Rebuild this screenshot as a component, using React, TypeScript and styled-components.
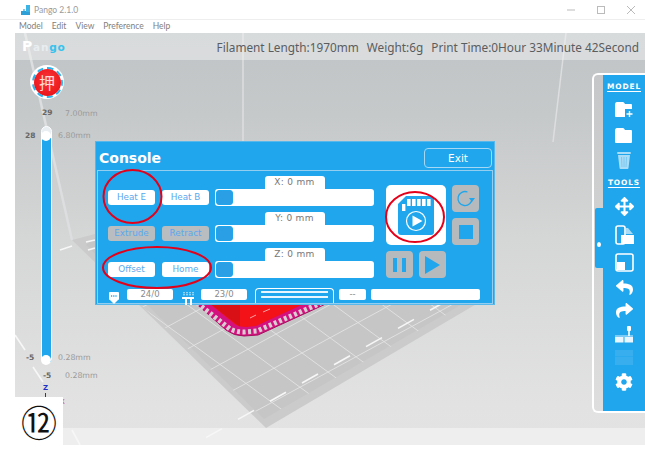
import React from "react";
import styled, { createGlobalStyle } from "styled-components";
import { FaArrowsAlt, FaCog, FaReply, FaShare } from "react-icons/fa";

const BLUE = "#1fa6ec";
const UI = `"Noto Sans", "DejaVu Sans", sans-serif`;
const WIDE = `"DejaVu Sans", "Noto Sans", sans-serif`;

const Global = createGlobalStyle`
  html, body { margin: 0; padding: 0; background: #fff; }
  * { box-sizing: border-box; }
`;

const Page = styled.div`
  position: relative;
  width: 645px;
  height: 464px;
  overflow: hidden;
  background: #fff;
  font-family: ${UI};
`;

const TitleBar = styled.header`
  height: 20px;
  display: flex;
  align-items: center;
  padding: 0 10px 0 21px;
  border-bottom: 1px solid #eeeeee;
`;

const AppTitle = styled.span`
  margin-left: 3px;
  font-size: 8.5px;
  color: #9a9a9a;
  font-family: Lato, sans-serif;
  flex: 1;
`;

const WindowButtons = styled.div`
  display: flex;
  align-items: center;
  gap: 22px;
`;

const MenuBar = styled.nav`
  height: 13px;
  display: flex;
  align-items: center;
  gap: 9px;
  padding-left: 19px;
`;

const MenuItem = styled.span`
  font-family: Lato, sans-serif;
  font-size: 8.5px;
  line-height: 13px;
  color: #808080;
`;

const Workspace = styled.main`
  position: relative;
  margin-left: 15px;
  height: 412px;
  overflow: hidden;
  background: linear-gradient(180deg, #c1c4c6 0%, #c6c9ca 20%, #d5d6d6 50%, #e2e2e2 90%, #e3e3e3 100%);
`;

const Scene = styled.svg`
  position: absolute;
  left: 0;
  top: 0;
`;

const StatsBar = styled.div`
  position: relative;
  height: 27px;
  display: flex;
  align-items: center;
  padding: 0 6px 0 7px;
  background: rgba(240, 241, 241, 0.5);
`;

const Logo = styled.div`
  font-family: ${WIDE};
  font-weight: 700;
  font-size: 10.5px;
  letter-spacing: 0.8px;
  flex: 1;
  margin-top: -1px;
`;

const LogoP = styled.span`
  color: #fff;
  font-size: 14px;
`;
const LogoAn = styled.span`
  color: #e8edf0;
`;
const LogoGo = styled.span`
  color: #35c3ee;
`;

const Stats = styled.div`
  display: flex;
  gap: 8px;
  font-size: 11.8px;
  color: #5a5d5f;
  white-space: nowrap;
`;

const LevelText = styled.span<{ $x: number; $y: number; $strong?: boolean }>`
  position: absolute;
  left: ${(p) => p.$x}px;
  top: ${(p) => p.$y}px;
  font-family: ${WIDE};
  font-size: ${(p) => (p.$strong ? 7.5 : 7.8)}px;
  font-weight: ${(p) => (p.$strong ? 700 : 400)};
  line-height: 10px;
  white-space: nowrap;
  color: ${(p) => (p.$strong ? "#666" : "#9a9a9a")};
`;

const EStop = styled.div`
  position: absolute;
  left: 15px;
  top: 32px;
  width: 34px;
  height: 34px;
  border-radius: 50%;
  background: #fff;
  display: flex;
  align-items: center;
  justify-content: center;
`;

const EStopRing = styled.div`
  width: 31px;
  height: 31px;
  border-radius: 50%;
  border: 2px dashed #2cb5ee;
  display: flex;
`;

const EStopFace = styled.div`
  flex: 1;
  border-radius: 50%;
  background: radial-gradient(circle at 50% 40%, #f8383c 0%, #ee1a1f 65%, #c91015 100%);
  color: #ffd9d9;
  font-family: "Noto Sans CJK JP", sans-serif;
  font-size: 16px;
  line-height: 26px;
  text-align: center;
`;

const LayerTrack = styled.div`
  position: absolute;
  left: 26px;
  top: 93px;
  width: 11px;
  height: 237px;
  border: 1.5px solid #fff;
  border-radius: 6px;
  background: #e8eef2;
`;

const LayerFill = styled.div`
  position: absolute;
  left: 0;
  right: 0;
  top: 11px;
  bottom: 0;
  background: ${BLUE};
`;

const LayerKnob = styled.span<{ $edge: "top" | "bottom" }>`
  position: absolute;
  left: -1px;
  width: 10px;
  height: 10px;
  border-radius: 50%;
  background: #fff;
  ${(p) => (p.$edge === "top" ? "top: 4px;" : "bottom: -3px;")}
`;

const AxisZ = styled.span`
  position: absolute;
  left: 28px;
  top: 351px;
  font-family: ${WIDE};
  font-size: 7px;
  font-weight: 700;
  line-height: 8px;
  color: #2230c8;
  &::after {
    content: "";
    position: absolute;
    left: 2px;
    top: 9px;
    width: 1px;
    height: 5px;
    background: #2230c8;
  }
`;

const AxisX = styled.span`
  position: absolute;
  left: 45px;
  top: 365px;
  font-family: ${WIDE};
  font-size: 7px;
  color: #c8402f;
`;

const Toolbar = styled.aside`
  position: absolute;
  right: 0;
  top: 40px;
  width: 53px;
  height: 340px;
  display: flex;
  border: 2px solid #fff;
  border-right: none;
  border-radius: 6px 0 0 6px;
  background: linear-gradient(180deg, #c6c7c8, #dedede);
`;

const DrawerTab = styled.div`
  position: absolute;
  left: 1px;
  top: 133px;
  width: 8px;
  height: 60px;
  background: ${BLUE};
  border-radius: 2px 0 0 2px;
  &::after {
    content: "";
    position: absolute;
    left: 2px;
    top: 34px;
    width: 4px;
    height: 5px;
    border-radius: 50%;
    background: #fff;
  }
`;

const ToolColumn = styled.div`
  margin-left: 9px;
  flex: 1;
  background: ${BLUE};
  display: flex;
  flex-direction: column;
  align-items: center;
`;

const ToolHeading = styled.div`
  height: 22px;
  display: flex;
  align-items: center;
  color: #fff;
  font-family: ${WIDE};
  font-size: 7.4px;
  font-weight: 700;
  letter-spacing: 0.9px;
  text-decoration: underline;
  text-underline-offset: 2px;
`;

const ToolSlot = styled.div<{ $h: number }>`
  height: ${(p) => p.$h}px;
  display: flex;
  align-items: center;
  justify-content: center;
  color: #fff;
`;

const Console = styled.section`
  position: absolute;
  left: 80px;
  top: 108px;
  width: 400px;
  height: 164px;
  background: ${BLUE};
  border: 1px solid #58b8ec;
  display: flex;
  flex-direction: column;
`;

const ConsoleHead = styled.div`
  height: 28px;
  flex: none;
  display: flex;
  align-items: center;
  justify-content: space-between;
  padding: 1px 2px 0 3px;
`;

const ConsoleTitle = styled.h2`
  margin: 0;
  font-family: ${WIDE};
  font-size: 14px;
  font-weight: 700;
  color: #fff;
  margin-top: 3px;
`;

const ExitButton = styled.button`
  width: 68px;
  height: 20px;
  margin-top: 2px;
  background: transparent;
  border: 1px solid #a5d8f4;
  border-radius: 4px;
  color: #fff;
  font-family: ${WIDE};
  font-size: 10.5px;
  font-weight: 400;
  padding: 0;
`;

const ConsoleBody = styled.div`
  flex: 1;
  margin: 0 1px 1px;
  border: 1px solid #93cdf0;
  padding: 5px 0 0 10px;
  display: flex;
  flex-direction: column;
  gap: 10px;
`;

const ControlsArea = styled.div`
  display: flex;
  gap: 12px;
`;

const Rows = styled.div`
  width: 266px;
  display: flex;
  flex-direction: column;
  gap: 6px;
`;

const Row = styled.div`
  height: 30px;
  display: flex;
  align-items: flex-end;
  gap: 6px;
`;

const ButtonPair = styled.div`
  display: flex;
  gap: 7px;
  margin-bottom: 1px;
`;

const SmallButton = styled.button<{ $disabled?: boolean }>`
  width: 47px;
  height: 15px;
  padding: 0;
  border: none;
  border-radius: 3px;
  background: ${(p) => (p.$disabled ? "#b9bdc0" : "#fff")};
  color: #5aa8ee;
  font-family: ${WIDE};
  font-size: 8.8px;
  line-height: 15px;
`;

const Axis = styled.div`
  width: 159px;
  display: flex;
  flex-direction: column;
  align-items: center;
`;

const AxisTab = styled.div`
  width: 60px;
  height: 13px;
  border-radius: 3px 3px 0 0;
  background: #fff;
  color: #777;
  font-family: ${WIDE};
  font-size: 9px;
  line-height: 13px;
  letter-spacing: 0.3px;
  text-align: center;
`;

const AxisTrack = styled.div`
  width: 100%;
  height: 17px;
  border-radius: 3px;
  background: #fff;
  padding: 1px;
`;

const AxisKnob = styled.div`
  width: 17px;
  height: 15px;
  border-radius: 3px;
  border: 1px solid ${BLUE};
  background: #2a9fe6;
`;

const Actions = styled.div`
  margin-top: 9px;
  display: grid;
  grid-template-columns: repeat(3, 27px);
  grid-auto-rows: 27px;
  gap: 6px;
`;

const SdButton = styled.div`
  grid-column: span 2;
  grid-row: span 2;
  background: #fff;
  border-radius: 5px;
  display: flex;
  align-items: center;
  justify-content: center;
`;

const GreyButton = styled.div`
  background: #b7babc;
  border-radius: 4px;
  display: flex;
  align-items: center;
  justify-content: center;
`;

const StatusRow = styled.div`
  display: flex;
  align-items: flex-start;
`;

const StatusIcon = styled.div<{ $gap: number }>`
  width: 12px;
  height: 13px;
  margin: 0 7px 0 0;
  margin-left: ${(p) => p.$gap}px;
`;

const StatusField = styled.div<{ $w: number; $gap?: number }>`
  width: ${(p) => p.$w}px;
  height: 11px;
  margin-top: 1px;
  margin-left: ${(p) => p.$gap ?? 0}px;
  border-radius: 2px;
  background: #fff;
  color: #8b8b8b;
  font-family: ${WIDE};
  font-size: 8.5px;
  line-height: 11px;
  text-align: center;
`;

const FanButton = styled.div`
  width: 79px;
  height: 15px;
  margin-left: 8px;
  border: 1.5px solid #fff;
  border-bottom: none;
  border-radius: 4px 4px 0 0;
  padding: 2px 5px 0;
  display: flex;
  flex-direction: column;
  gap: 3px;
`;

const FanLine = styled.span`
  display: block;
  height: 2px;
  background: #e9f6fd;
`;

const Annotations = styled.svg`
  position: absolute;
  left: 0;
  top: 0;
  pointer-events: none;
`;

const StepBadge = styled.div`
  position: absolute;
  left: 15px;
  top: 397px;
  width: 48px;
  height: 48px;
  background: #fff;
  display: flex;
  align-items: center;
  justify-content: center;
  color: #111;
  font-family: "Noto Sans CJK JP", sans-serif;
  font-size: 36px;
  line-height: 48px;
`;

/* ---------- drawings ---------- */

const nodeOf = (i: number, j: number): [number, number] => [302 + i * 28 + j * 26, 353 - i * 15.2 + j * 19];

function SceneArt() {
  const aLines = [-6, -5, -4, -3, -2, -1, 0, 1];
  const bLines = [-9, -8, -7, -6, -5, -4, -3, -2, -1, 0, 1, 2, 3, 4, 5, 6];
  const dashes = [-3, -2, -1, 0, 1, 2, 3, 4].map((k) => [302 + k * 32, 383 - k * 18.2] as const);
  return (
    <Scene width={630} height={412} viewBox="15 33 630 412">
      <defs>
        <clipPath id="gridClip">
          <polygon points="264,419 90,258 140,142 490,142 490,290" />
        </clipPath>
      </defs>
      <rect x={15} y={428} width={630} height={17} fill="#eeeeee" />
      <g stroke="#dcdedf" strokeWidth={1.5} fill="none">
        <line x1={243} y1={33} x2={243} y2={145} />
        <line x1={25} y1={33} x2={72} y2={240} strokeWidth={2.5} />
        <line x1={566} y1={33} x2={553} y2={142} />
      </g>
      <polygon points="72,240 266,428 490,296 490,142 95,234" fill="#cbcbcb" />
      <polygon points="86,245 264,419 490,288 490,142 95,238" fill="#c6c6c6" />
      <g clipPath="url(#gridClip)" stroke="#e3e3e3" strokeWidth={0.9}>
        {aLines.map((j) => {
          const a = nodeOf(-8, j);
          const b = nodeOf(10, j);
          return <line key={j} x1={a[0]} y1={a[1]} x2={b[0]} y2={b[1]} />;
        })}
        {bLines.map((i) => {
          const a = nodeOf(i, -8);
          const b = nodeOf(i, 3);
          return <line key={i} x1={a[0]} y1={a[1]} x2={b[0]} y2={b[1]} />;
        })}
      </g>
      <g stroke="#f7f7f7" strokeWidth={1.6}>
        {dashes.map(([x, y]) => (
          <line key={x} x1={x} y1={y} x2={x + 16} y2={y - 9} />
        ))}
        <line x1={15} y1={335} x2={25} y2={350} />
        <line x1={33} y1={367} x2={43} y2={382} />
        <line x1={72} y1={430} x2={80} y2={445} />
        <line x1={60} y1={250} x2={72} y2={246} />
        <line x1={86} y1={242} x2={95} y2={240} />
        <line x1={88} y1={250} x2={95} y2={248} />
      </g>
      <path d="M192 300 L226 330 Q234 336 244 336 L258 335 L330 302 Z" fill="#d4127f" stroke="#a50f5f" strokeWidth={1} />
      <path
        d="M197 303 L230 329 Q236 332 244 332 L257 331 L323 302"
        fill="none"
        stroke="#d9ccd2"
        strokeWidth={5}
        strokeDasharray="3 2.5"
      />
      <path d="M205 300 L236 325 Q240 327 246 327 L256 326 L312 300 Z" fill="#f21218" />
      <path d="M240 327 L240 300 L205 300 Z" fill="#d91116" />
      <line x1={250} y1={318} x2={256} y2={315} stroke="#f3a3a3" strokeWidth={1} />
      <line x1={263} y1={312} x2={270} y2={309} stroke="#f3a3a3" strokeWidth={1} />
    </Scene>
  );
}

const AppIcon = () => (
  <svg width={10} height={10} viewBox="0 0 10 10">
    <rect x={0} y={6} width={9} height={4} fill="#2f9fd8" />
    <rect x={5} y={0} width={4} height={7} fill="#3cb4e6" />
    <rect x={2} y={4} width={2} height={2} fill="#7cc8ea" />
  </svg>
);

const WinIcons = () => (
  <WindowButtons>
    <svg width={8} height={8} viewBox="0 0 8 8"><line x1={0} y1={4} x2={8} y2={4} stroke="#bbb" /></svg>
    <svg width={8} height={8} viewBox="0 0 8 8"><rect x={0.5} y={0.5} width={7} height={7} fill="none" stroke="#bbb" /></svg>
    <svg width={8} height={8} viewBox="0 0 8 8"><path d="M0 0 L8 8 M8 0 L0 8" stroke="#bbb" /></svg>
  </WindowButtons>
);

const FolderIcon = ({ plus }: { plus?: boolean }) => (
  <svg width={20} height={17} viewBox="0 0 20 17">
    <path d="M1 4 Q1 1 3 1 L9 1 Q10 1 11 3 L17 3 Q18 3 18 4 L18 15 Q18 16 17 16 L2 16 Q1 16 1 15 Z" fill="#fff" />
    {plus && (
      <>
        <rect x={11} y={8} width={9} height={9} fill={BLUE} />
        <path d="M15.5 10 V16 M12.5 13 H18.5" stroke="#fff" strokeWidth={1.4} />
      </>
    )}
  </svg>
);

const TrashIcon = () => (
  <svg width={14} height={17} viewBox="0 0 14 17">
    <rect x={0} y={0} width={14} height={2} rx={1} fill="#a9dcf7" />
    <path d="M1 3 H13 L11.5 16 Q11.4 17 10.5 17 H3.5 Q2.6 17 2.5 16 Z" fill="#a9dcf7" />
    <path d="M4.5 5 L5 15 M7 5 V15 M9.5 5 L9 15" stroke="#6fc3ef" strokeWidth={0.8} />
  </svg>
);

const SliceIcon = () => (
  <svg width={19} height={20} viewBox="0 0 19 20">
    <rect x={1} y={1} width={9} height={18} rx={2} fill={BLUE} stroke="#fff" strokeWidth={1.6} />
    <path d="M11 3 H13 L18 9 H11 Z" fill="#a9dcf7" />
    <path d="M6 10 H19 V19 H6 Z" fill="#fff" />
  </svg>
);

const ScaleIcon = () => (
  <svg width={19} height={19} viewBox="0 0 19 19">
    <rect x={1} y={1} width={17} height={17} rx={2} fill={BLUE} stroke="#fff" strokeWidth={1.6} />
    <rect x={2} y={9} width={8} height={8} fill="#fff" />
  </svg>
);

const LevelIcon = () => (
  <svg width={18} height={17} viewBox="0 0 18 17">
    <rect x={0} y={11} width={8.5} height={5.5} fill="#fff" opacity={0.9} />
    <rect x={9.5} y={11} width={8.5} height={5.5} fill="#fff" opacity={0.9} />
    <rect x={0} y={9.5} width={18} height={1} fill="#d6f0fd" />
    <rect x={12} y={0} width={4} height={5} rx={1} fill="#fff" />
    <rect x={13.2} y={5} width={1.6} height={5} fill="#fff" />
  </svg>
);

const DisabledIcon = () => (
  <svg width={18} height={15} viewBox="0 0 18 15">
    <rect width={18} height={6} fill="#39aeee" />
    <rect y={6.5} width={18} height={8.5} fill="#39aeee" />
  </svg>
);

const SdIcon = () => (
  <svg width={36} height={39} viewBox="0 0 36 39">
    <path d="M8 0 H33 Q36 0 36 3 V36 Q36 39 33 39 H3 Q0 39 0 36 V8 Z" fill={BLUE} />
    {[0, 1, 2, 3, 4].map((n) => (
      <rect key={n} x={9 + n * 5} y={3} width={3.6} height={7} fill="#fff" />
    ))}
    <rect x={4} y={8} width={3.4} height={7} fill="#fff" />
    <circle cx={18} cy={25} r={9.5} fill="none" stroke="#fff" strokeWidth={1.2} />
    <path d="M14.5 19.5 L24.5 25 L14.5 30.5 Z" fill="#fff" />
  </svg>
);

const ReloadIcon = () => (
  <svg width={19} height={19} viewBox="0 0 19 19">
    <path d="M16 9.5 A7 7 0 1 1 11.5 3" fill="none" stroke={BLUE} strokeWidth={1.3} />
    <path d="M13 9 L19 9 L16 13 Z" fill={BLUE} />
  </svg>
);

const StopIcon = () => (
  <svg width={14} height={14} viewBox="0 0 14 14">
    <rect width={14} height={14} fill={BLUE} />
  </svg>
);

const PauseIcon = () => (
  <svg width={13} height={14} viewBox="0 0 13 14">
    <rect width={4} height={14} fill={BLUE} />
    <rect x={9} width={4} height={14} fill={BLUE} />
  </svg>
);

const PlayIcon = () => (
  <svg width={15} height={18} viewBox="0 0 15 18">
    <path d="M0 0 L15 9 L0 18 Z" fill={BLUE} />
  </svg>
);

const NozzleIcon = () => (
  <svg width={12} height={13} viewBox="0 0 12 13">
    <path d="M1 1 Q1 0 2 0 H10 Q11 0 11 1 V7 Q11 8 10 8 L6 12 L2 8 Q1 8 1 7 Z" fill="#fff" />
    <path d="M3 4 H9" stroke={BLUE} strokeWidth={1.4} strokeDasharray="1.2 1" />
  </svg>
);

const BedIcon = () => (
  <svg width={12} height={13} viewBox="0 0 12 13">
    <path d="M2 0 V4 M5 0 V4 M8 0 V4 M11 0 V4" stroke="#fff" strokeWidth={1} strokeDasharray="1.2 0.6" />
    <rect x={0} y={5} width={12} height={2} fill="#fff" />
    <rect x={3} y={7} width={2} height={6} fill="#fff" />
    <rect x={8} y={7} width={2} height={6} fill="#fff" />
  </svg>
);

export default function App() {
  return (
    <>
      <Global />
      <Page>
        <TitleBar>
          <AppIcon />
          <AppTitle>Pango 2.1.0</AppTitle>
          <WinIcons />
        </TitleBar>
        <MenuBar>
          <MenuItem>Model</MenuItem>
          <MenuItem>Edit</MenuItem>
          <MenuItem>View</MenuItem>
          <MenuItem>Preference</MenuItem>
          <MenuItem>Help</MenuItem>
        </MenuBar>

        <Workspace>
          <SceneArt />
          <StatsBar>
            <Logo>
              <LogoP>P</LogoP>
              <LogoAn>an</LogoAn>
              <LogoGo>go</LogoGo>
            </Logo>
            <Stats>
              <span>Filament Length:1970mm</span>
              <span>Weight:6g</span>
              <span>Print Time:0Hour 33Minute 42Second</span>
            </Stats>
          </StatsBar>

          <EStop>
            <EStopRing>
              <EStopFace>押</EStopFace>
            </EStopRing>
          </EStop>

          <LevelText $strong $x={27} $y={75}>29</LevelText>
          <LevelText $x={50} $y={76}>7.00mm</LevelText>
          <LevelText $strong $x={10} $y={98}>28</LevelText>
          <LevelText $x={43} $y={98}>6.80mm</LevelText>
          <LayerTrack>
            <LayerFill />
            <LayerKnob $edge="top" />
            <LayerKnob $edge="bottom" />
          </LayerTrack>
          <LevelText $strong $x={11} $y={320}>-5</LevelText>
          <LevelText $x={43} $y={320}>0.28mm</LevelText>
          <LevelText $strong $x={28} $y={338}>-5</LevelText>
          <LevelText $x={50} $y={338}>0.28mm</LevelText>
          <AxisZ>Z</AxisZ>
          <AxisX>X</AxisX>

          <Toolbar>
            <DrawerTab />
            <ToolColumn>
              <ToolHeading>MODEL</ToolHeading>
              <ToolSlot $h={25}><FolderIcon plus /></ToolSlot>
              <ToolSlot $h={27}><FolderIcon /></ToolSlot>
              <ToolSlot $h={22}><TrashIcon /></ToolSlot>
              <ToolHeading>TOOLS</ToolHeading>
              <ToolSlot $h={27}><FaArrowsAlt size={19} /></ToolSlot>
              <ToolSlot $h={29}><SliceIcon /></ToolSlot>
              <ToolSlot $h={26}><ScaleIcon /></ToolSlot>
              <ToolSlot $h={24}><FaReply size={17} /></ToolSlot>
              <ToolSlot $h={23}><FaShare size={17} /></ToolSlot>
              <ToolSlot $h={25}><LevelIcon /></ToolSlot>
              <ToolSlot $h={21}><DisabledIcon /></ToolSlot>
              <ToolSlot $h={28}><FaCog size={18} /></ToolSlot>
            </ToolColumn>
          </Toolbar>

          <Console>
            <ConsoleHead>
              <ConsoleTitle>Console</ConsoleTitle>
              <ExitButton>Exit</ExitButton>
            </ConsoleHead>
            <ConsoleBody>
              <ControlsArea>
                <Rows>
                  <Row>
                    <ButtonPair>
                      <SmallButton>Heat E</SmallButton>
                      <SmallButton>Heat B</SmallButton>
                    </ButtonPair>
                    <Axis>
                      <AxisTab>X: 0 mm</AxisTab>
                      <AxisTrack><AxisKnob /></AxisTrack>
                    </Axis>
                  </Row>
                  <Row>
                    <ButtonPair>
                      <SmallButton $disabled>Extrude</SmallButton>
                      <SmallButton $disabled>Retract</SmallButton>
                    </ButtonPair>
                    <Axis>
                      <AxisTab>Y: 0 mm</AxisTab>
                      <AxisTrack><AxisKnob /></AxisTrack>
                    </Axis>
                  </Row>
                  <Row>
                    <ButtonPair>
                      <SmallButton>Offset</SmallButton>
                      <SmallButton>Home</SmallButton>
                    </ButtonPair>
                    <Axis>
                      <AxisTab>Z: 0 mm</AxisTab>
                      <AxisTrack><AxisKnob /></AxisTrack>
                    </Axis>
                  </Row>
                </Rows>
                <Actions>
                  <SdButton><SdIcon /></SdButton>
                  <GreyButton><ReloadIcon /></GreyButton>
                  <GreyButton><StopIcon /></GreyButton>
                  <GreyButton><PauseIcon /></GreyButton>
                  <GreyButton><PlayIcon /></GreyButton>
                </Actions>
              </ControlsArea>
              <StatusRow>
                <StatusIcon $gap={0}><NozzleIcon /></StatusIcon>
                <StatusField $w={46}>24/0</StatusField>
                <StatusIcon $gap={9}><BedIcon /></StatusIcon>
                <StatusField $w={46}>23/0</StatusField>
                <FanButton>
                  <FanLine />
                  <FanLine />
                </FanButton>
                <StatusField $w={27} $gap={5}>--</StatusField>
                <StatusField $w={109} $gap={5} />
              </StatusRow>
            </ConsoleBody>
          </Console>
        </Workspace>

        <StepBadge>⑫</StepBadge>

        <Annotations width={645} height={464} viewBox="0 0 645 464">
          <g fill="none" stroke="#e5001a" strokeWidth={2}>
            <ellipse cx={132.5} cy={196.5} rx={29} ry={26.5} />
            <ellipse cx={157} cy={267.5} rx={54} ry={20.5} />
            <ellipse cx={415} cy={217} rx={29} ry={25} />
          </g>
        </Annotations>
      </Page>
    </>
  );
}
